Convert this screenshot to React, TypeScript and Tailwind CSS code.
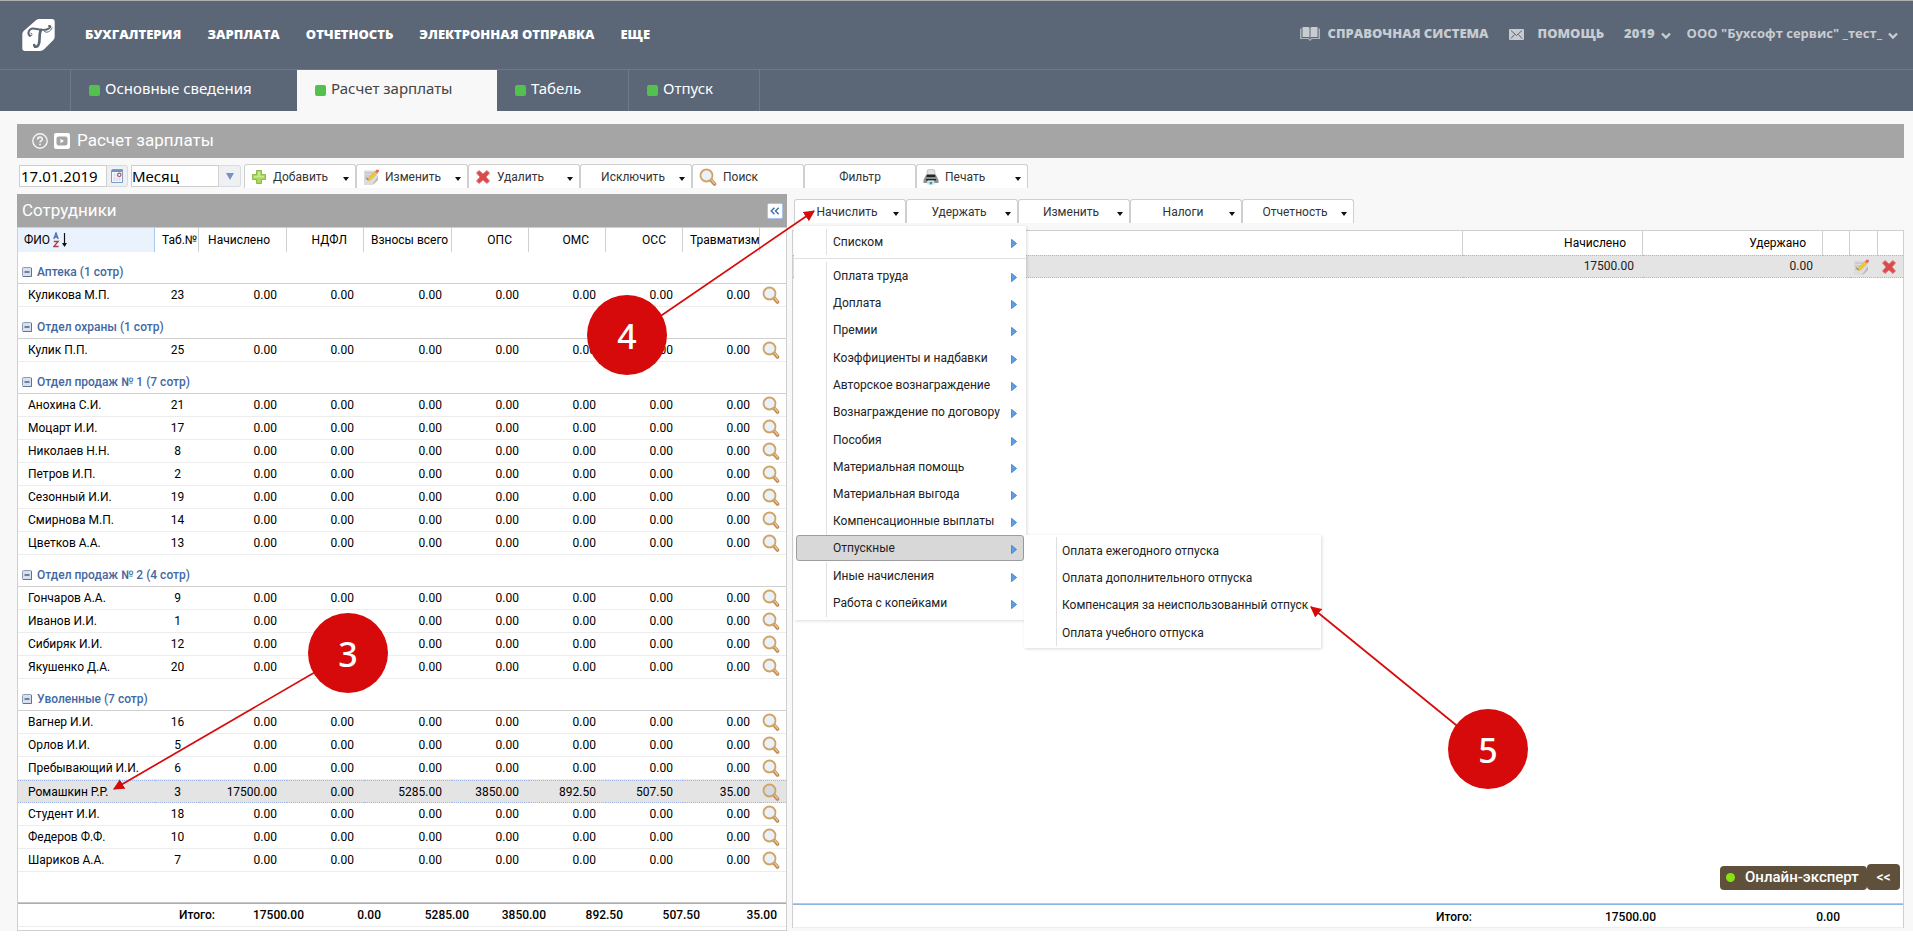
import type { ReactNode } from "react";

type Employee = { name: string; id: number; values?: string[]; selected?: boolean };
type Group = { title: string; rows: Employee[] };

const ZEROS = ["0.00", "0.00", "0.00", "0.00", "0.00", "0.00", "0.00"];

const groups: Group[] = [
  { title: "Аптека (1 сотр)", rows: [{ name: "Куликова М.П.", id: 23 }] },
  { title: "Отдел охраны (1 сотр)", rows: [{ name: "Кулик П.П.", id: 25 }] },
  {
    title: "Отдел продаж № 1 (7 сотр)",
    rows: [
      { name: "Анохина С.И.", id: 21 },
      { name: "Моцарт И.И.", id: 17 },
      { name: "Николаев Н.Н.", id: 8 },
      { name: "Петров И.П.", id: 2 },
      { name: "Сезонный И.И.", id: 19 },
      { name: "Смирнова М.П.", id: 14 },
      { name: "Цветков А.А.", id: 13 },
    ],
  },
  {
    title: "Отдел продаж № 2 (4 сотр)",
    rows: [
      { name: "Гончаров А.А.", id: 9 },
      { name: "Иванов И.И.", id: 1 },
      { name: "Сибиряк И.И.", id: 12 },
      { name: "Якушенко Д.А.", id: 20 },
    ],
  },
  {
    title: "Уволенные (7 сотр)",
    rows: [
      { name: "Вагнер И.И.", id: 16 },
      { name: "Орлов И.И.", id: 5 },
      { name: "Пребывающий И.И.", id: 6 },
      {
        name: "Ромашкин Р.Р.",
        id: 3,
        values: ["17500.00", "0.00", "5285.00", "3850.00", "892.50", "507.50", "35.00"],
        selected: true,
      },
      { name: "Студент И.И.", id: 18 },
      { name: "Федеров Ф.Ф.", id: 10 },
      { name: "Шариков А.А.", id: 7 },
    ],
  },
];

const moneyColumns = ["Начислено", "НДФЛ", "Взносы всего", "ОПС", "ОМС", "ОСС", "Травматизм"];
const totals = ["17500.00", "0.00", "5285.00", "3850.00", "892.50", "507.50", "35.00"];

const menuItems = [
  "Оплата труда",
  "Доплата",
  "Премии",
  "Коэффициенты и надбавки",
  "Авторское вознаграждение",
  "Вознаграждение по договору",
  "Пособия",
  "Материальная помощь",
  "Материальная выгода",
  "Компенсационные выплаты",
  "Отпускные",
  "Иные начисления",
  "Работа с копейками",
];

const submenuItems = [
  "Оплата ежегодного отпуска",
  "Оплата дополнительного отпуска",
  "Компенсация за неиспользованный отпуск",
  "Оплата учебного отпуска",
];

function Logo() {
  return (
    <svg className="h-8 w-[33px]" viewBox="0 0 98 97" aria-hidden="true">
      <path d="M42 3Q46 0 52 0H90Q98 0 98 8V54Q98 60 94 64L66 92Q61 97 54 97H8Q0 97 0 89V46Q0 40 4 36Z" fill="#fff" />
      <path d="M23 51C14 45 20 29 32 29C46 29 60 37 76 31C86 27 88 20 81 21" fill="none" stroke="#5b6677" strokeWidth="6" strokeLinecap="round" />
      <path d="M57 33C49 44 55 62 50 76C47 85 38 87 36 79" fill="none" stroke="#5b6677" strokeWidth="8" strokeLinecap="round" />
      <path d="M24 52C31 52 31 43 26 43M66 37C73 45 87 37 90 27" fill="none" stroke="#5b6677" strokeWidth="3" strokeLinecap="round" />
    </svg>
  );
}

function BookIcon() {
  return (
    <svg className="h-[14px] w-5" viewBox="0 0 20 14" aria-hidden="true">
      <path d="M0 1.5H1.5V11H8.5L10 12.2L11.5 11H18.5V1.5H20V12H12L10 14L8 12H0Z" fill="#aeb4bb" />
      <path d="M2.5 0H8Q9.5 0 9.5 1V10.500Q9 10 8 10H2.500ZM17.500 0H12Q10.500 0 10.500 1V10.500Q11 10 12 10H17.500Z" fill="#c8ccd0" />
    </svg>
  );
}

function MailIcon() {
  return (
    <svg className="h-[11px] w-[15px]" viewBox="0 0 15 11" aria-hidden="true">
      <rect width="15" height="11" rx="1" fill="#c8ccd0" />
      <path d="M2 1.500L7.500 6.500L13 1.500M2 9.500L5.500 5.500M13 9.500L9.500 5.500" fill="none" stroke="#5b6677" strokeWidth="1" />
    </svg>
  );
}

function ChevronIcon() {
  return (
    <svg className="mt-1 h-2 w-[10px]" viewBox="0 0 10 8" aria-hidden="true">
      <path d="M1 1.500L5 5.500L9 1.500" fill="none" stroke="#c8ccd0" strokeWidth="2.400" />
    </svg>
  );
}

function PlusIcon() {
  return (
    <svg className="size-4" viewBox="0 0 16 16" aria-hidden="true">
      <path d="M5.500 1.500H10.500V5.500H14.500V10.500H10.500V14.500H5.500V10.500H1.500V5.500H5.500Z" fill="#a9d65c" stroke="#8cba4a" strokeLinejoin="round" />
      <path d="M7 3H9V7H13V8.500H3V7H7Z" fill="#c9ea8d" />
    </svg>
  );
}

function PencilIcon() {
  return (
    <svg className="size-4" viewBox="0 0 16 16" aria-hidden="true">
      <path d="M1 1.500H12L15 7L9 16H1Z" fill="#dcdcdc" />
      <path d="M9 16L15 7V11L11 15Z" fill="#b9b9b9" />
      <path d="M2 4H10M2 7H8M2 10H5" stroke="#bcbcbc" />
      <path d="M2.500 7.500L6 10.500L4.500 11Z" fill="#5f8a3c" />
      <path d="M5 11.500L6 8.500L12 2.500L14 4.500L8 10.500Z" fill="#f0cb2e" stroke="#cf9f1c" strokeWidth=".5" />
      <path d="M12 2.500L13.500 .500L16 1V2.500L14 4.500Z" fill="#e9696b" />
    </svg>
  );
}

function CrossIcon() {
  return (
    <svg className="size-4" viewBox="0 0 16 16" aria-hidden="true">
      <path d="M1.500 4L4 1.500L8 5L12 1.500L14.500 4L11 8L14.500 12L12 14.500L8 11L4 14.500L1.500 12L5 8Z" fill="#d94b4b" stroke="#e07c7c" strokeLinejoin="round" />
    </svg>
  );
}

function MagnifierIcon({ dim = false }: { dim?: boolean }) {
  return (
    <svg className="size-[18px]" viewBox="0 0 18 18" aria-hidden="true">
      <path d="M11.500 11.500L15.500 16" stroke="#c08a55" strokeWidth="3.600" strokeLinecap="round" />
      <path d="M12.500 12L15.500 15.500" stroke="#e9c48c" strokeWidth="1.400" strokeLinecap="round" />
      <circle cx="7.500" cy="7.500" r="6" fill={dim ? "#d3dae3" : "#e9f1fa"} stroke="#d0a465" strokeWidth="1.800" />
    </svg>
  );
}

function PrinterIcon() {
  return (
    <svg className="size-4" viewBox="0 0 16 16" aria-hidden="true">
      <path d="M4.500 1Q8 -.5 11.500 1L12.500 7H3.500Z" fill="#dfe3e4" stroke="#a9adaf" strokeWidth=".6" />
      <path d="M3 6L13 6L15.500 11V14H.500V11Z" fill="#8b8f91" />
      <path d="M4 5.500H12L12.500 8H3.500ZM3 10H13V11.500H3Z" fill="#232627" />
      <path d="M4 13L5 11.500H11L12 15.500H4Z" fill="#d5e4e4" />
      <path d="M6.500 13H9.500L8.500 15.500H7Z" fill="#2f9c9c" />
    </svg>
  );
}

function CalendarIcon() {
  return (
    <svg className="h-[14px] w-3" viewBox="0 0 12 14" aria-hidden="true">
      <path d="M.500 2Q.500 .500 2 .500H11.500V13.500H.500Z" fill="#f3f6fb" stroke="#7c9cc8" />
      <path d="M1 1H11V3H1Z" fill="#6f92c4" />
      <path d="M3.500 4V12M6 4V12M8.500 8V12M2 6H6M2 9H10M2 11H10" stroke="#d3dae6" strokeWidth=".7" />
      <circle cx="8.300" cy="5.800" r="1.700" fill="#fff" stroke="#b44a4a" strokeWidth="1.100" />
    </svg>
  );
}

function CollapseIcon() {
  return (
    <svg className="size-[10px]" viewBox="0 0 10 10" aria-hidden="true">
      <rect x=".5" y=".5" width="9" height="9" rx="1" fill="#d6e0ee" stroke="#8b9cb4" />
      <path d="M9.500 1V9.500H1" fill="none" stroke="#5f7290" />
      <path d="M2.500 5H7.500" stroke="#2f3f5c" strokeWidth="1.200" />
    </svg>
  );
}

function SortIcon() {
  return (
    <svg className="h-4 w-[15px]" viewBox="0 0 15 16" fill="none" aria-hidden="true">
      <path d="M.8 7L3 1L5.200 7M1.500 5H4.500" stroke="#4a6bb5" strokeWidth="1.300" />
      <path d="M.8 9.500H5.200L.8 14.500H5.600" stroke="#a8434b" strokeWidth="1.300" />
      <path d="M11.500 1V14" stroke="#111" strokeWidth="1.200" />
      <path d="M9 11L11.500 15L14 11Z" fill="#111" />
    </svg>
  );
}

function SubmenuArrow() {
  return (
    <svg className="mt-[3px] h-[9px] w-[6px]" viewBox="0 0 6 9" aria-hidden="true">
      <path d="M.5 .3L5.600 4.500L.5 8.700Z" fill="#5c9fe6" stroke="#3f7fc9" strokeWidth=".8" />
    </svg>
  );
}

function ToolButton({ label, icon, caret = true }: { label: string; icon?: ReactNode; caret?: boolean }) {
  return (
    <button
      type="button"
      className="flex h-6 w-[112px] shrink-0 items-center rounded-t-[3px] border border-b-0 border-[#cfcfcf] bg-white pr-[6px] pl-[6px] text-xs text-[#333]"
    >
      {icon}
      <span className={icon ? "pl-[6px]" : "flex-1 text-center"}>{label}</span>
      {caret && (
        <svg className="mt-1 ml-auto h-[4px] w-[6px]" viewBox="0 0 6 4" aria-hidden="true">
          <path d="M0 0H6L3 4Z" fill="#111" />
        </svg>
      )}
    </button>
  );
}

function Header() {
  return (
    <header className="bg-[#5b6677]">
      <div className="flex h-[70px] items-center border-t border-b border-t-[#aeb0b2] border-b-[#6d7a89] pr-[15px] pl-[22px] font-['Open_Sans',sans-serif] text-[13px] font-extrabold">
        <a href="#home" aria-label="Главная">
          <Logo />
        </a>
        <nav className="ml-[30px] flex gap-[26px] text-white">
          {["БУХГАЛТЕРИЯ", "ЗАРПЛАТА", "ОТЧЕТНОСТЬ", "ЭЛЕКТРОННАЯ ОТПРАВКА", "ЕЩЕ"].map((item) => (
            <a key={item} href="#menu">
              {item}
            </a>
          ))}
        </nav>
        <div className="ml-auto flex items-center pb-[2px] text-[#c8ccd0]">
          <a href="#reference" className="flex items-center gap-2">
            <BookIcon />
            СПРАВОЧНАЯ СИСТЕМА
          </a>
          <a href="#help" className="ml-5 flex items-center gap-[14px]">
            <MailIcon />
            ПОМОЩЬ
          </a>
          <button type="button" className="ml-5 flex items-center gap-[6px]">
            2019
            <ChevronIcon />
          </button>
          <button type="button" className="ml-4 flex items-center gap-[6px] font-bold">
            ООО "Бухсофт сервис" _тест_
            <ChevronIcon />
          </button>
        </div>
      </div>
      <nav className="flex h-[41px] pl-[70px] font-['Noto_Sans',sans-serif] text-[15px] text-white">
        {[
          { label: "Основные сведения", style: "w-[227px] border-l border-[#6d7a89]" },
          { label: "Расчет зарплаты", style: "w-[200px] bg-[#f8f8f8] text-[#444]" },
          { label: "Табель", style: "w-[131px]" },
          { label: "Отпуск", style: "w-[132px] border-x border-[#6d7a89]" },
        ].map((tab) => (
          <a key={tab.label} href="#tab" className={`flex items-center gap-[5px] pb-1 pl-[18px] ${tab.style}`}>
            <span className="mt-[3px] size-[11px] rounded-[2px] bg-[#52c150]" />
            {tab.label}
          </a>
        ))}
      </nav>
    </header>
  );
}

function TitleBar() {
  return (
    <div className="mt-[13px] flex h-[34px] items-center bg-[#a5a5a5] pl-[15px] text-white">
      <svg className="size-4" viewBox="0 0 16 16" fill="none" aria-hidden="true">
        <circle cx="8" cy="8" r="7.200" stroke="#f4f4f4" strokeWidth="1.400" />
        <path d="M5.700 6.500C5.700 3.400 10.300 3.400 10.300 6.200C10.300 7.700 8 7.800 8 9.600M8 10.800V12.300" stroke="#f4f4f4" strokeWidth="1.600" />
      </svg>
      <svg className="ml-[6px] size-4" viewBox="0 0 16 16" aria-hidden="true">
        <rect width="16" height="16" rx="2" fill="#fff" />
        <rect x="2.500" y="3.500" width="11" height="9" rx="2" fill="#a5a5a5" />
        <path d="M6.500 5.800L10 8L6.500 10.200Z" fill="#fff" />
      </svg>
      <h1 className="ml-[7px] text-[17px]">Расчет зарплаты</h1>
    </div>
  );
}

function Toolbar() {
  return (
    <div className="mt-[6px] flex pl-[2px]">
      <label className="mt-px flex h-[22px] w-[109px] font-['Noto_Sans',sans-serif] text-[15px] text-black">
        <input
          aria-label="Дата"
          defaultValue="17.01.2019"
          className="h-full w-[88px] border border-[#cfcfcf] bg-white px-px outline-none"
        />
        <span className="flex flex-1 items-center justify-center rounded-r-[3px] border border-l-0 border-[#d8dbe0] bg-[#eef0f3]">
          <CalendarIcon />
        </span>
      </label>
      <div className="mt-px ml-[3px] flex h-[22px] w-[110px] font-['Noto_Sans',sans-serif] text-[15px] text-black">
        <select
          aria-label="Период"
          className="h-full w-[88px] appearance-none border border-[#cfcfcf] bg-white leading-5 outline-none"
        >
          <option>Месяц</option>
        </select>
        <span className="flex flex-1 items-center justify-center rounded-r-[3px] border border-l-0 border-[#d8dbe0] bg-[#eef0f3]">
          <svg className="h-[7px] w-2" viewBox="0 0 8 7" aria-hidden="true">
            <path d="M0 0H8L4 7Z" fill="#7395c6" />
          </svg>
        </span>
      </div>
      <div className="ml-[3px] flex">
        <ToolButton label="Добавить" icon={<PlusIcon />} />
        <ToolButton label="Изменить" icon={<PencilIcon />} />
        <ToolButton label="Удалить" icon={<CrossIcon />} />
        <ToolButton label="Исключить" />
        <ToolButton label="Поиск" icon={<MagnifierIcon />} caret={false} />
        <ToolButton label="Фильтр" caret={false} />
        <ToolButton label="Печать" icon={<PrinterIcon />} />
      </div>
    </div>
  );
}

function EmployeeColumns() {
  return (
    <colgroup>
      <col className="w-[137px]" />
      <col className="w-11" />
      <col className="w-[88px]" />
      <col className="w-[77px]" />
      <col className="w-[88px]" />
      <col className="w-[77px]" />
      <col className="w-[77px]" />
      <col className="w-[77px]" />
      <col className="w-[77px]" />
      <col />
    </colgroup>
  );
}

function EmployeeRow({ row }: { row: Employee }) {
  const cell = row.selected
    ? "h-[23px] border-y border-dotted border-[#a3bae9] bg-[#e4e4e4]"
    : "h-[23px] border-b border-[#ededed]";
  return (
    <tr className="leading-5">
      <td className={`${cell} pl-[10px] whitespace-nowrap`}>{row.name}</td>
      <td className={`${cell} pl-px text-center`}>{row.id}</td>
      {(row.values ?? ZEROS).map((value, i) => (
        <td key={moneyColumns[i]} className={`${cell} pr-[10px] text-right`}>
          {value}
        </td>
      ))}
      <td className={cell}>
        <button type="button" aria-label={`Открыть: ${row.name}`} className="ml-[2px] block">
          <MagnifierIcon dim={row.selected} />
        </button>
      </td>
    </tr>
  );
}

function EmployeePanel() {
  return (
    <section className="flex w-[770px] shrink-0 flex-col border border-t-0 border-[#d0d0d0] bg-white">
      <div className="-mx-px flex h-[33px] items-center justify-between bg-[#a5a5a5] pr-1 pl-[5px]">
        <h2 className="text-[17px] text-white">Сотрудники</h2>
        <button
          type="button"
          aria-label="Свернуть панель"
          className="flex size-4 items-center justify-center rounded-[2px] border border-[#a9c4ea] bg-white"
        >
          <svg className="h-2 w-[10px]" viewBox="0 0 10 8" fill="none" aria-hidden="true">
            <path d="M4.500 .8L1.300 4L4.500 7.200M8.700 .8L5.500 4L8.700 7.200" stroke="#4573b0" strokeWidth="1.500" />
          </svg>
        </button>
      </div>
      <table className="w-full table-fixed border-separate border-spacing-0 text-xs">
        <EmployeeColumns />
        <thead>
          <tr className="text-left leading-6">
            <th className="h-[25px] border-t border-r border-t-[#d0d0d0] border-r-[#a9c8f0] bg-[#eaf3fd] p-0 pl-[6px] font-normal">
              <span className="flex items-center gap-[3px]">
                ФИО
                <SortIcon />
              </span>
            </th>
            <th className="overflow-hidden border-t border-r border-[#d0d0d0] p-0 pl-[7px] font-normal whitespace-nowrap">Таб.№</th>
            {moneyColumns.map((name) => (
              <th
                key={name}
                className="overflow-hidden border-t border-r border-[#d0d0d0] p-0 pr-4 pl-[7px] text-right font-normal whitespace-nowrap"
              >
                {name}
              </th>
            ))}
            <th className="border-t border-[#d0d0d0] p-0" aria-label="Действия" />
          </tr>
        </thead>
        {groups.map((group) => (
          <tbody key={group.title}>
            <tr>
              <th colSpan={10} className="h-8 border-b border-[#d0d0d0] p-0 pt-2 pl-1 text-left font-medium text-[#4468a2]">
                <span className="flex items-center gap-[5px] leading-5">
                  <CollapseIcon />
                  <span className="pt-px">{group.title}</span>
                </span>
              </th>
            </tr>
            {group.rows.map((row) => (
              <EmployeeRow key={row.name} row={row} />
            ))}
          </tbody>
        ))}
      </table>
      <div className="mt-auto border-t border-[#c6c6c6] pb-[3px]">
        <table className="w-full table-fixed border-t border-b border-t-[#8fb3e2] border-b-[#ededed] text-xs">
          <colgroup>
            <col className="w-[201px]" />
            <col className="w-[85px]" />
            <col className="w-[77px]" />
            <col className="w-[88px]" />
            <col className="w-[77px]" />
            <col className="w-[77px]" />
            <col className="w-[77px]" />
            <col className="w-[77px]" />
            <col />
          </colgroup>
          <tbody>
            <tr className="text-right font-medium">
              <th className="h-[23px] pr-1 font-medium">Итого:</th>
              {totals.map((value, i) => (
                <td key={moneyColumns[i]}>{value}</td>
              ))}
              <td />
            </tr>
          </tbody>
        </table>
      </div>
    </section>
  );
}

function AccrualMenu() {
  return (
    <div className="absolute top-[27px] left-0 z-10 w-[232px] bg-white pb-[3px] text-xs text-[#222] shadow-[1px_1px_3px_rgba(0,0,0,0.15)]">
      <div className="border-b border-[#e0e0e0] pt-[3px] pb-[3px] pl-8">
        <button type="button" className="flex h-[26px] w-full items-center justify-between border-l border-[#e0e0e0] pr-[9px] pl-[6px]">
          Списком
          <SubmenuArrow />
        </button>
      </div>
      <ul className="mt-[3px] flex h-[355px] flex-col">
        {menuItems.map((item) => {
          const open = item === "Отпускные";
          return (
            <li key={item} className="relative flex-1">
              <button
                type="button"
                className={
                  open
                    ? "ml-[2px] flex h-[26px] w-[228px] items-center justify-between rounded-[3px] border border-[#9d9d9d] bg-[#d8d8d8] pr-[6px] pl-9"
                    : "ml-8 flex h-full w-[200px] items-center justify-between border-l border-[#e0e0e0] pr-[9px] pl-[6px]"
                }
              >
                {item}
                <SubmenuArrow />
              </button>
              {open && (
                <ul className="absolute top-0 left-[230px] flex h-[113px] w-[297px] flex-col bg-white py-[2px] pl-8 shadow-[1px_1px_3px_rgba(0,0,0,0.15)]">
                  {submenuItems.map((sub) => (
                    <li key={sub} className="flex-1">
                      <button type="button" className="flex h-full w-full items-center border-l border-[#e0e0e0] pl-[5px] whitespace-nowrap">
                        {sub}
                      </button>
                    </li>
                  ))}
                </ul>
              )}
            </li>
          );
        })}
      </ul>
    </div>
  );
}

function AccrualPanel() {
  const cell = "h-[23px] border-y border-dotted border-[#a3bae9] p-0";
  const head = "h-6 border-r border-[#cfcfcf] p-0 font-normal";
  return (
    <section className="flex min-w-0 flex-1 flex-col pb-[3px]">
      <div className="relative mt-[5px] ml-[2px] flex pb-[7px]">
        <ToolButton label="Начислить" />
        <ToolButton label="Удержать" />
        <ToolButton label="Изменить" />
        <ToolButton label="Налоги" />
        <ToolButton label="Отчетность" />
        <AccrualMenu />
      </div>
      <div className="flex flex-1 flex-col border border-b-0 border-[#cfcfcf] bg-white">
        <table className="w-full table-fixed border-separate border-spacing-0 text-xs">
          <colgroup>
            <col />
            <col className="w-[180px]" />
            <col className="w-[180px]" />
            <col className="w-[27px]" />
            <col className="w-7" />
            <col className="w-[25px]" />
          </colgroup>
          <thead>
            <tr className="text-right">
              <th className={head} aria-label="Вид начисления" />
              <th className={`${head} pr-4!`}>Начислено</th>
              <th className={`${head} pr-4!`}>Удержано</th>
              <th className={head} aria-label="Статус" />
              <th className={head} aria-label="Изменить" />
              <th className="h-6 p-0" aria-label="Удалить" />
            </tr>
          </thead>
          <tbody>
            <tr className="bg-[#e4e4e4] text-right leading-5 text-[#222]">
              <td className={cell} />
              <td className={`${cell} pr-[9px]! pb-px!`}>17500.00</td>
              <td className={`${cell} pr-[10px]! pb-px!`}>0.00</td>
              <td className={cell} />
              <td className={cell}>
                <button type="button" aria-label="Изменить запись" className="ml-[3px] block">
                  <PencilIcon />
                </button>
              </td>
              <td className={cell}>
                <button type="button" aria-label="Удалить запись" className="ml-[3px] block">
                  <CrossIcon />
                </button>
              </td>
            </tr>
          </tbody>
        </table>
        <div className="mt-auto mr-[3px] flex items-end justify-end pb-[13px] font-medium text-white">
          <button type="button" className="flex h-6 w-[147px] items-center rounded bg-[#5f503b] pb-px pl-[6px] text-[15px]">
            <span className="mr-[10px] size-[9px] rounded-full bg-[#86e40f]" />
            Онлайн-эксперт
          </button>
          <button type="button" className="h-[26px] w-[33px] rounded bg-[#5f503b] text-sm">
            &lt;&lt;
          </button>
        </div>
        <div className="border-t border-[#c6c6c6]">
          <table className="w-full table-fixed border-t border-b border-t-[#8fb3e2] border-b-[#ededed] text-xs">
            <colgroup>
              <col />
              <col className="w-[184px]" />
              <col className="w-[184px]" />
              <col className="w-[63px]" />
            </colgroup>
            <tbody>
              <tr className="text-right font-medium">
                <th className="h-[23px] pt-[2px] font-medium">Итого:</th>
                <td className="pt-[2px]">17500.00</td>
                <td className="pt-[2px]">0.00</td>
                <td />
              </tr>
            </tbody>
          </table>
        </div>
      </div>
    </section>
  );
}

function Callouts() {
  return (
    <div className="pointer-events-none absolute inset-0 z-20 overflow-hidden font-['Noto_Sans',sans-serif] text-[34px] leading-none text-white">
      <svg className="absolute top-0 left-0 h-[937px] w-[1913px]" viewBox="0 0 1913 937" aria-hidden="true">
        <defs>
          <marker id="arrow-head" viewBox="0 0 10 10" refX="9" refY="5" markerWidth="11" markerHeight="11" markerUnits="userSpaceOnUse" orient="auto">
            <path d="M0 0L10 5L0 10Z" fill="#d60a0a" />
          </marker>
        </defs>
        <g stroke="#d60a0a" strokeWidth="1.700">
          <line x1="627" y1="339" x2="814" y2="211" markerEnd="url(#arrow-head)" />
          <line x1="348" y1="653" x2="114" y2="789" markerEnd="url(#arrow-head)" />
          <line x1="1488" y1="751" x2="1311" y2="607" markerEnd="url(#arrow-head)" />
        </g>
      </svg>
      <span className="absolute top-[295px] left-[587px] flex size-20 items-center justify-center rounded-full bg-[#d60a0a] pt-[2px] font-medium">4</span>
      <span className="absolute top-[613px] left-[308px] flex size-20 items-center justify-center rounded-full bg-[#d60a0a] pt-[2px] font-medium">3</span>
      <span className="absolute top-[709px] left-[1448px] flex size-20 items-center justify-center rounded-full bg-[#d60a0a] pt-[2px] font-medium">5</span>
    </div>
  );
}

export default function App() {
  return (
    <div className="relative flex min-h-screen flex-col bg-white pb-[6px] font-[Roboto,sans-serif] text-black">
      <Header />
      <main className="flex flex-1 flex-col bg-[#f8f8f8] pr-[9px] pl-[17px]">
        <TitleBar />
        <Toolbar />
        <div className="mt-[6px] flex flex-1 gap-[5px]">
          <EmployeePanel />
          <AccrualPanel />
        </div>
      </main>
      <Callouts />
    </div>
  );
}
